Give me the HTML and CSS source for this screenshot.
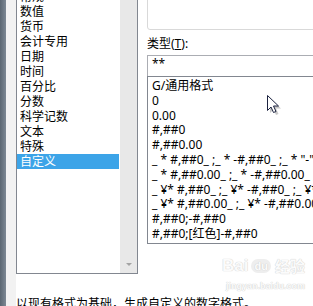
FILE: index.html
```html
<!DOCTYPE html>
<html lang="zh-CN">
<head>
    <meta charset="UTF-8">
    <title>设置单元格格式 - 自定义</title>
    <link rel="stylesheet" href="styles.css">
</head>
<body>

<div class="screen">
    <div class="edge"></div>
    <div class="gutter"></div>

    <div class="dialog">
        <div class="panels">
            <div class="category-box">
                <ul class="category-list">
                    <li>常规</li>
                    <li>数值</li>
                    <li>货币</li>
                    <li>会计专用</li>
                    <li>日期</li>
                    <li>时间</li>
                    <li>百分比</li>
                    <li>分数</li>
                    <li>科学记数</li>
                    <li>文本</li>
                    <li>特殊</li>
                    <li class="selected">自定义</li>
                </ul>
                <div class="scrollbar">
                    <span class="arrow-down"></span>
                </div>
            </div>

            <div class="format-side">
                <div class="sample-box"></div>
                <label class="type-label" for="typeInput">类型(<u>T</u>):</label>
                <div class="type-input" id="typeInput">**</div>
                <ul class="format-list">
                    <li>G/通用格式</li>
                    <li>0</li>
                    <li>0.00</li>
                    <li>#,##0</li>
                    <li>#,##0.00</li>
                    <li>_ * #,##0_ ;_ * -#,##0_ ;_ * "-"_ ;_ @_ </li>
                    <li>_ * #,##0.00_ ;_ * -#,##0.00_ ;_ * "-"??_ ;_ @_ </li>
                    <li>_ ¥* #,##0_ ;_ ¥* -#,##0_ ;_ ¥* "-"_ ;_ @_ </li>
                    <li>_ ¥* #,##0.00_ ;_ ¥* -#,##0.00_ ;_ ¥* "-"??_ ;_ @_ </li>
                    <li>#,##0;-#,##0</li>
                    <li>#,##0;[红色]-#,##0</li>
                </ul>
            </div>
        </div>

        <p class="hint">以现有格式为基础，生成自定义的数字格式。</p>
    </div>

    <!-- mouse pointer over the list -->
    <svg class="pointer" width="16" height="22" viewBox="0 0 16 22">
        <path d="M2.5 2.5 L2.5 17.5 L6 14 L8.5 19.5 L11 18.5 L8.5 13 L13.5 13 Z" fill="#c8c8c8" transform="translate(1.5 1.5)"/>
        <path d="M1.5 1.5 L1.5 16.5 L5 13 L7.5 18.5 L10 17.5 L7.5 12 L12.5 12 Z" fill="#fff" stroke="#1c2340" stroke-width="1"/>
    </svg>

    <!-- faint site watermark -->
    <div class="watermark">
        <div class="wm-logo">Bai<span class="paw">du</span><span class="wm-cn">经验</span></div>
        <div class="wm-url">jingyan.baidu.com</div>
    </div>
</div>

</body>
</html>
```

FILE: styles.css
```css
html, body {
    margin: 0;
    padding: 0;
    background: #fff;
}

.screen {
    width: 313px;
    height: 306px;
    overflow: hidden;
    display: flex;
    position: relative;
    font-family: "Noto Sans", "Noto Sans CJK SC", sans-serif;
    font-size: 12px;
    color: #000;
}

.edge {
    flex: 0 0 6px;
    background: linear-gradient(to right, #5a6672, #7d8894);
}

.gutter {
    flex: 0 0 10px;
    background: #f2f2f2;
}

.dialog {
    flex: 0 0 auto;
    display: flex;
    flex-direction: column;
}

.panels {
    display: flex;
    height: 274px;
    flex-shrink: 0;
}

/* left category list */
.category-box {
    width: 120px;
    display: flex;
    border-left: 1px solid #828790;
    border-right: 1px solid #828790;
    border-bottom: 1px solid #828790;
}

.category-list {
    list-style: none;
    margin: -11px 0 0 0;
    padding: 0;
    width: 102px;
}

.category-list li {
    height: 15px;
    line-height: 15px;
    padding-left: 3px;
    white-space: nowrap;
}

.category-list li.selected {
    background: #3ca4e8;
    color: #fff;
}

.scrollbar {
    width: 17px;
    margin-left: 1px;
    background: #e8e8e8;
    display: flex;
    flex-direction: column;
    justify-content: flex-end;
    align-items: center;
}

.arrow-down {
    width: 0;
    height: 0;
    border-left: 3px solid transparent;
    border-right: 3px solid transparent;
    border-top: 3px solid #a3a3a3;
    margin-bottom: 7px;
}

/* right side */
.format-side {
    width: 180px;
    margin-left: 9px;
    display: flex;
    flex-direction: column;
}

.sample-box {
    height: 38px;
    margin-top: -10px;
    border: 1px solid #d9d9d9;
    border-radius: 3px;
    flex-shrink: 0;
}

.type-label {
    margin-top: 6px;
    line-height: 15px;
    height: 15px;
}

.type-label u {
    text-underline-offset: 1px;
}

.type-input {
    margin-top: 4px;
    height: 21px;
    border: 1px solid #abadb3;
    border-bottom: none;
    padding: 1px 0 0 4px;
    line-height: 13px;
    box-sizing: border-box;
    flex-shrink: 0;
}

.format-list {
    list-style: none;
    margin: 0;
    padding: 2px 0 0 4px;
    height: 168px;
    box-sizing: border-box;
    border: 1px solid #828790;
    border-right: none;
    overflow: hidden;
    flex-shrink: 0;
}

.format-list li {
    line-height: 14.8px;
    height: 14.8px;
    white-space: nowrap;
}

.hint {
    margin: 22px 0 0 0;
    line-height: 15px;
    white-space: nowrap;
}

.pointer {
    position: absolute;
    left: 266px;
    top: 94px;
}

.watermark {
    position: absolute;
    left: 222px;
    top: 256px;
    color: #fbfbfb;
    text-shadow: 0 0 1px #cfcfcf, 0 0 1px #cfcfcf;
    font-family: "Liberation Sans", sans-serif;
    font-weight: bold;
}

.wm-logo {
    font-size: 17px;
    line-height: 20px;
    white-space: nowrap;
    display: flex;
    align-items: center;
}

.wm-logo .paw {
    margin-left: 3px;
    font-size: 11px;
    line-height: 14px;
    padding: 0 3px;
    border-radius: 7px;
    background: #eeeeee;
}

.wm-logo .wm-cn {
    margin-left: 4px;
    font-family: "Noto Sans CJK SC", sans-serif;
    font-size: 15px;
}

.wm-url {
    font-size: 9px;
    line-height: 11px;
    margin: 5px 0 0 4px;
    white-space: nowrap;
}
```
